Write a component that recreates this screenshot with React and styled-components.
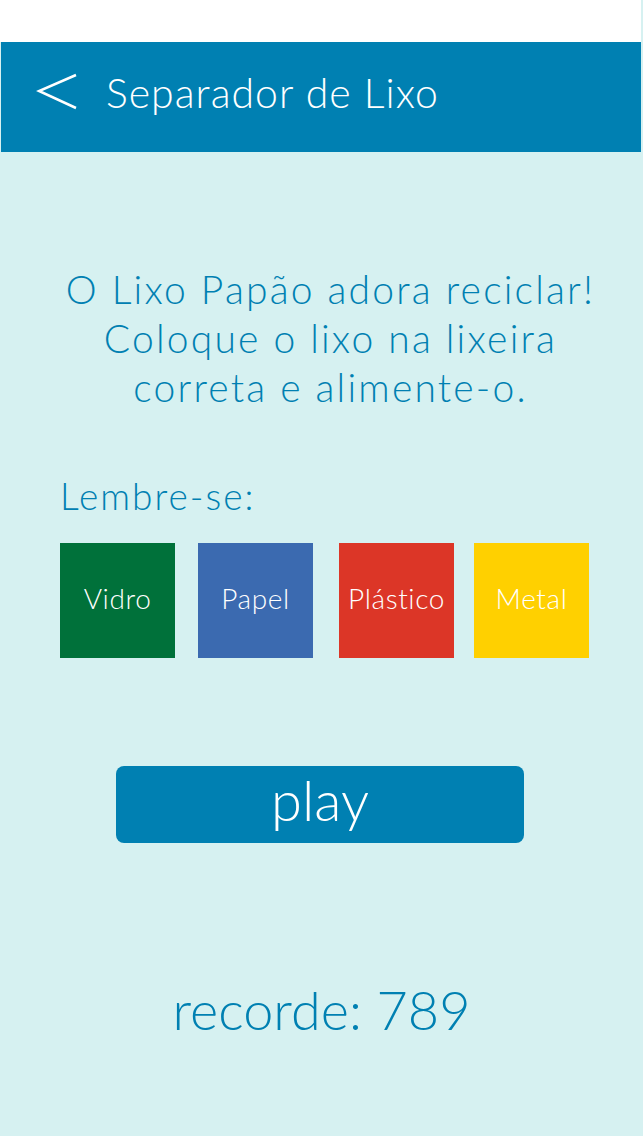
import React from 'react'
import styled, { createGlobalStyle } from 'styled-components'

const Global = createGlobalStyle`
  html, body { margin: 0; padding: 0; background: #fff; }
  body { font-family: "Lato", "Open Sans", sans-serif; }
`

const Screen = styled.div`
  width: 643px;
  height: 1136px;
  display: flex;
  flex-direction: column;
  background: #d6f1f1;
  overflow: hidden;
`

const StatusBar = styled.div`
  height: 42px;
  background: #fff;
  margin-right: 2px;
`

const Header = styled.div`
  height: 110px;
  background: #0080b2;
  margin: 0 2px 0 1px;
  display: flex;
  align-items: center;
  gap: 28px;
  padding: 0 0 10px 35px;
  box-sizing: border-box;
`

const Title = styled.h1`
  margin: 0;
  font-weight: 300;
  font-size: 41px;
  color: #fff;
  letter-spacing: 1px;
`

const Body = styled.div`
  display: flex;
  flex-direction: column;
`

const Intro = styled.p`
  margin: 113px 0 0;
  padding-left: 18px;
  text-align: center;
  font-weight: 300;
  font-size: 39px;
  line-height: 49px;
  letter-spacing: 2.2px;
  color: #0080b2;
`

const Remember = styled.h2`
  margin: 62px 0 0 60px;
  font-weight: 300;
  font-size: 37px;
  line-height: 44px;
  letter-spacing: 2px;
  color: #0080b2;
`

const Bins = styled.div`
  display: flex;
  margin: 25px 0 0 60px;
`

const Bin = styled.div`
  width: 115px;
  height: 115px;
  margin-right: ${(p) => p.gap}px;
  background: ${(p) => p.color};
  color: #fff;
  display: flex;
  align-items: center;
  justify-content: center;
  padding-bottom: 6px;
  box-sizing: border-box;
  font-weight: 300;
  font-size: 28px;
  letter-spacing: 0.6px;
`

const Play = styled.button`
  align-self: flex-start;
  margin: 108px 0 0 116px;
  width: 408px;
  height: 77px;
  border: none;
  border-radius: 8px;
  background: #0080b2;
  color: #fff;
  font-family: "Lato", sans-serif;
  font-weight: 300;
  font-size: 56px;
  line-height: 1;
  padding: 0 0 10px;
`

const Record = styled.div`
  margin-top: 134px;
  text-align: center;
  font-weight: 300;
  font-size: 54px;
  color: #0080b2;
`

const bins = [
  { name: 'Vidro', color: '#00713a', gap: 23 },
  { name: 'Papel', color: '#3b6ab0', gap: 26 },
  { name: 'Plástico', color: '#dc3627', gap: 20 },
  { name: 'Metal', color: '#ffd000', gap: 0 },
]

const App = () => {
  return (
    <Screen>
      <Global />
      <StatusBar />
      <Header>
        <svg width="42" height="40" viewBox="0 0 42 40">
          <polyline points="40,3 3,19 40,36" fill="none" stroke="#fff" strokeWidth="2.5" />
        </svg>
        <Title>Separador de Lixo</Title>
      </Header>
      <Body>
        <Intro>
          O Lixo Papão adora reciclar!<br />
          Coloque o lixo na lixeira<br />
          correta e alimente-o.
        </Intro>
        <Remember>Lembre-se:</Remember>
        <Bins>
          {bins.map((b) => (
            <Bin key={b.name} color={b.color} gap={b.gap}>{b.name}</Bin>
          ))}
        </Bins>
        <Play>play</Play>
        <Record>recorde: 789</Record>
      </Body>
    </Screen>
  )
}

export default App
